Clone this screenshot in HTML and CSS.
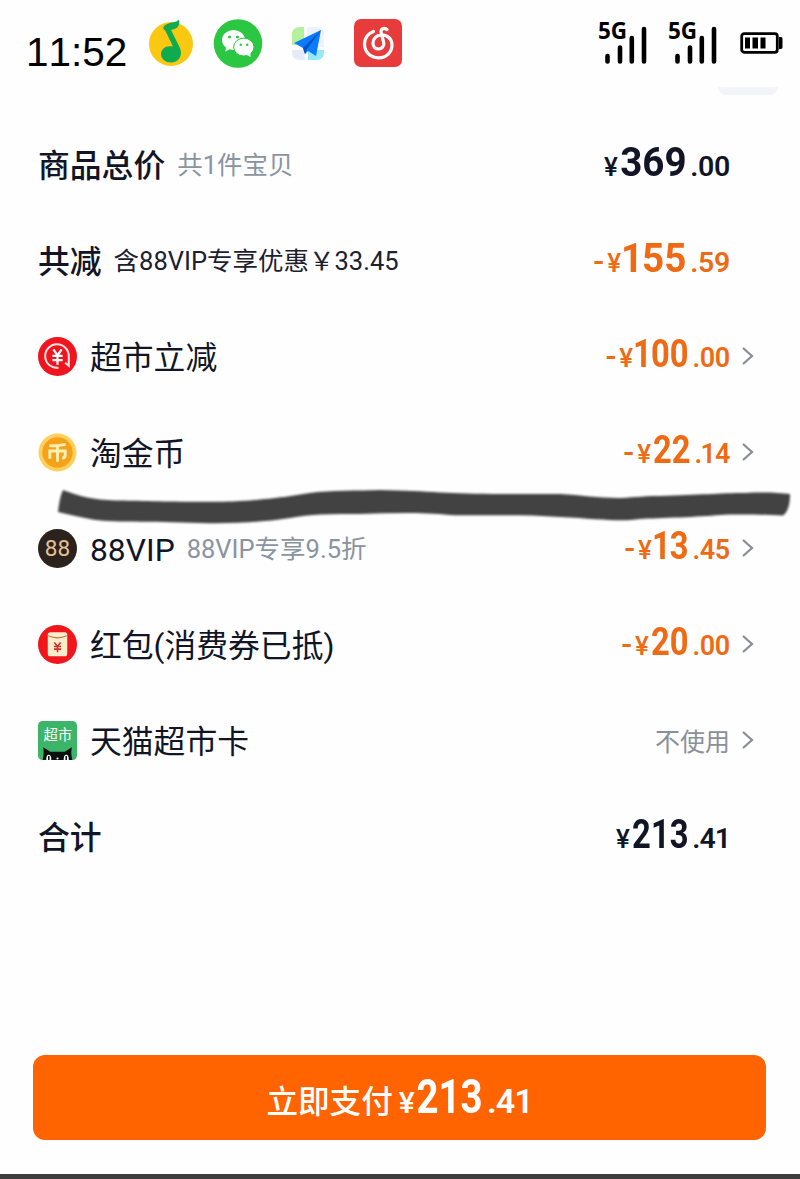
FILE: index.html
```
<!DOCTYPE html>
<html lang="zh-CN">

<head>
    <meta charset="UTF-8">
    <meta name="viewport" content="width=device-width, initial-scale=1.0">
    <title>确认订单</title>

    <link rel="stylesheet" href="styles.css">
</head>

<body>

    <div class="page">

        <header class="status-bar">
            <span class="time">11:52</span>

            <div class="apps">
                <!-- music -->
                <svg class="app-music" width="46" height="48" viewBox="0 0 46 48">
                    <circle cx="22" cy="25" r="22" fill="#fac810" />
                    <path d="M30 0.500C28 4 19 3 15 7C13.500 9 15 11 16.500 12L24 27.500C17 26 12 30 12 35C12 40 17 43.500 22 43.500C28 43.500 32 39 32 34C32 31 31 29 30 27L22 11C27 10 31.500 8 30 0.500Z" fill="#0fab4f" />
                </svg>
                <!-- chat -->
                <svg class="app-chat" width="50" height="50" viewBox="0 0 50 50">
                    <circle cx="25" cy="24.500" r="24.300" fill="#2bc642" />
                    <ellipse cx="20.500" cy="21" rx="11.500" ry="10" fill="#fff" />
                    <path d="M13 27.500L12.500 32.500L18 29.500Z" fill="#fff" />
                    <ellipse cx="30.800" cy="28.100" rx="10.200" ry="8.900" fill="#fff" stroke="#2bc642" stroke-width="1" />
                    <path d="M33 35.500L37.500 38L37.500 33Z" fill="#fff" />
                    <circle cx="16.500" cy="18" r="1.500" fill="#2bc642" />
                    <circle cx="24.500" cy="18" r="1.500" fill="#2bc642" />
                    <circle cx="27.700" cy="25.800" r="1.200" fill="#2bc642" />
                    <circle cx="34.200" cy="25.800" r="1.200" fill="#2bc642" />
                </svg>
                <!-- paper plane -->
                <svg class="app-plane" width="34" height="34" viewBox="0 0 34 34">
                    <path d="M1 16V9Q1 1 9 1H13V19H1Z" fill="#b5f09a" />
                    <path d="M16 1H26Q33 1 33 9V21H16Z" fill="#eef3fb" />
                    <path d="M1 24H14V34H9Q1 34 1 27Z" fill="#e8eaf8" />
                    <path d="M17 24H33V26Q33 34 25 34H17Z" fill="#96e8f6" />
                    <path d="M30 4L3 17L12 22L14 28L17 25L25 30Z" fill="#0b7bff" />
                    <path d="M30 4L12 22L14 28L16 23Z" fill="#0752c4" />
                </svg>
                <!-- cloud music -->
                <svg class="app-cloud" width="48" height="48" viewBox="0 0 48 48">
                    <rect width="48" height="48" rx="7" fill="#e83c3c" />
                    <path d="M19.500 12.500C13 15 10.500 20 10.500 25C10.500 33 16.500 38.800 24.500 38.800C32.500 38.800 38 33 38 26C38 19.500 33 15.800 27.500 15.800C22.500 16 19 19.500 19 24C19 28 21.500 30 24.500 30C28 30 30.500 27 29.700 23.500L27.300 14.500C26.500 11.500 27.500 9.500 30 9.300C31.300 9.300 32.300 9.800 33 10.600" fill="none" stroke="#fff" stroke-width="3.200" stroke-linecap="round" />
                </svg>
            </div>

            <div class="system">
                <svg class="signal" width="50" height="44" viewBox="0 0 50 44">
                    <text x="0" y="17">5G</text>
                    <path d="M9.500 34V39.500M22 25.500V39.500M33.800 16V39.500M46 7V39.500" />
                </svg>
                <svg class="signal" width="50" height="44" viewBox="0 0 50 44">
                    <text x="0" y="17">5G</text>
                    <path d="M9.500 34V39.500M22 25.500V39.500M33.800 16V39.500M46 7V39.500" />
                </svg>
                <svg class="battery" width="44" height="22" viewBox="0 0 44 22">
                    <rect x="1.700" y="1.700" width="35.600" height="18.600" rx="2.500" fill="#fff" stroke="#000" stroke-width="2.800" />
                    <path d="M5 5.500H10V16.500H5ZM12.500 5.500H18V16.500H12.500ZM20.500 5.500H25.500V16.500H20.500ZM39 5H41Q42.500 5 42.500 7V15Q42.500 17 41 17H39Z" />
                </svg>
            </div>
        </header>

        <div class="tab-edge"></div>

        <main class="bill">

            <div class="row strong">
                <span class="label">商品总价</span>
                <span class="note">共1件宝贝</span>
                <div class="price"><span class="yen">¥</span><b class="wide">369</b><i>.00</i></div>
            </div>

            <div class="row strong">
                <span class="label">共减</span>
                <span class="note dark">含88VIP专享优惠￥33.45</span>
                <div class="price orange"><span class="minus">-</span><span class="yen">¥</span><b class="wide"><span class="one">1</span>55</b><i>.59</i></div>
            </div>

            <div class="row">
                <svg class="icon" viewBox="0 0 38 38">
                    <circle cx="19" cy="19" r="19" fill="#f0141e" />
                    <path d="M20 30A11.500 11.500 0 1 1 30 19V28L26.500 25" fill="none" stroke="#ffe3df" stroke-width="2" />
                    <path d="M15 12L19 18L23 12M14 18.500H24M14 22.500H24M19 18V27" fill="none" stroke="#fff" stroke-width="2.200" />
                </svg>
                <span class="label">超市立减</span>
                <div class="price small orange"><span class="minus">-</span><span class="yen">¥</span><b><span class="one">1</span>00</b><i>.00</i></div>
                <svg class="arrow" viewBox="0 0 12 20"><path d="M1 2L10 10L1 18" /></svg>
            </div>

            <div class="row">
                <svg class="icon" viewBox="0 0 38 38">
                    <circle cx="19" cy="19" r="18.500" fill="#ffd05c" />
                    <circle cx="19" cy="19" r="14.800" fill="#f5a21b" />
                    <path d="M11 12.500Q19 12.500 27 11M11.500 25V17.500H26.500V22Q26.500 24.500 23.500 24.500M19 12.500V28" fill="none" stroke="#fff0b5" stroke-width="2.800" />
                </svg>
                <span class="label">淘金币</span>
                <div class="price small orange"><span class="minus">-</span><span class="yen">¥</span><b class="two">22</b><i>.<span class="one">1</span>4</i></div>
                <svg class="arrow" viewBox="0 0 12 20"><path d="M1 2L10 10L1 18" /></svg>
            </div>

            <div class="row">
                <svg class="icon" viewBox="0 0 38 38">
                    <circle cx="19" cy="19" r="19" fill="#2b221e" />
                    <text class="vip-text" x="19" y="26.500" text-anchor="middle">88</text>
                </svg>
                <span class="label">88VIP</span>
                <span class="note">88VIP专享9.5折</span>
                <div class="price small orange"><span class="minus">-</span><span class="yen">¥</span><b class="two"><span class="one">1</span>3</b><i>.45</i></div>
                <svg class="arrow" viewBox="0 0 12 20"><path d="M1 2L10 10L1 18" /></svg>
            </div>

            <div class="row">
                <svg class="icon" viewBox="0 0 38 38">
                    <circle cx="19" cy="19" r="19" fill="#f0161c" />
                    <rect x="9.500" y="7" width="19" height="23.500" rx="2.500" fill="#fdeccb" />
                    <path d="M10 10.500Q19 14.500 28 10.500" fill="none" stroke="#c4723e" stroke-width="1.200" />
                    <path d="M16 17L19 21L22 17M15.500 21H22.500M15.500 23.500H22.500M19 21V26.500" fill="none" stroke="#c8322c" stroke-width="1.500" />
                </svg>
                <span class="label">红包(消费券已抵)</span>
                <div class="price small orange"><span class="minus">-</span><span class="yen">¥</span><b class="two">20</b><i>.00</i></div>
                <svg class="arrow" viewBox="0 0 12 20"><path d="M1 2L10 10L1 18" /></svg>
            </div>

            <div class="row">
                <svg class="icon" viewBox="0 0 38 38">
                    <rect width="38" height="38" rx="4.500" fill="#3cb568" />
                    <text class="market-text" x="19.300" y="18.500" text-anchor="middle">超市</text>
                    <path d="M4.500 38C5.500 34 6 30 5 25.500L12 30H26L33 25.500C32 30 32.500 34 33.500 38Z" fill="#0c100e" />
                    <path d="M8 38Q8 33 10.500 33Q13 33 13 38ZM25 38Q25 33 27.500 33Q30 33 30 38Z" fill="#fff" />
                    <path d="M10.500 34V38M27.500 34V38" stroke="#0c100e" stroke-width="1.500" />
                    <circle cx="19" cy="36.500" r="1" fill="#fff" />
                </svg>
                <span class="label">天猫超市卡</span>
                <span class="unused">不使用</span>
                <svg class="arrow" viewBox="0 0 12 20"><path d="M1 2L10 10L1 18" /></svg>
            </div>

            <div class="row strong">
                <span class="label">合计</span>
                <div class="price"><span class="yen">¥</span><b class="narrow">213</b><i>.41</i></div>
            </div>

            <!-- marker line drawn over the list -->
            <svg class="marker" width="736" height="40" viewBox="56 486 736 40">
                <path d="M63 490C85 498 95 500 120 500.500C150 501 210 503 240 501C275 499 290 496 310 493C330 490 360 491 380 490C430 491 450 494 500 494H560C580 495 600 498 617 498C630 498 640 496 660 496C700 495 720 493 745 493C765 492 780 493 790 494C790 502 789 511 783 515.500C765 515 740 514 720 515C700 517 660 518 640 519C620 522 600 519 560 517C520 514 480 516 450 515C420 512 390 513 360 514C330 514 310 514 290 518C265 522 230 524 200 523C150 521 110 523 90 519C78 517 68 514 58 512C59 504 60 496 63 490Z" />
            </svg>

        </main>

        <button class="pay-btn">
            <span class="pay-text">立即支付</span>
            <span class="price pay-price"><span class="yen">¥</span><b class="narrow">213</b><i>.41</i></span>
        </button>

        <div class="bottom-line"></div>

    </div>

</body>

</html>
```

FILE: styles.css
```
*,
*::before,
*::after {
    margin: 0;
    padding: 0;
    box-sizing: border-box;
}

body {
    background-color: #fefefe;
    color: #111525;
    font-family: Roboto, "Noto Sans CJK SC", sans-serif;
}

.page {
    display: flex;
    flex-direction: column;
    width: 800px;
    height: 1179px;
    overflow: hidden;
}

/* status bar */

.status-bar {
    display: flex;
    align-items: flex-start;
    height: 87px;
    padding: 19px 16px 0 26px;
}

.time {
    width: 123px;
    margin-top: 10px;
    color: #000;
    font: 40.5px/46px "Liberation Sans", sans-serif;
    font-kerning: none;
}

.apps,
.system {
    display: flex;
    align-items: flex-start;
}

.app-music {
    margin-right: 18px;
}

.app-plane {
    margin: 7px 29px 0 28px;
}

.system {
    margin-left: auto;
    padding-top: 3px;
}

.signal {
    margin-right: 20px;
    overflow: visible;
}

.signal + .battery {
    margin-left: 2px;
}

.signal text {
    font: bold 22.5px "Noto Sans", sans-serif;
}

.signal path {
    fill: none;
    stroke: #000;
    stroke-width: 4.6;
    stroke-linecap: round;
}

.battery {
    margin-top: 10px;
}

.tab-edge {
    width: 60px;
    height: 8px;
    margin-left: 718px;
    border-radius: 0 0 8px 8px;
    background-color: #f1f4f8;
}

/* bill rows */

.bill {
    position: relative;
    margin-top: 21px;
}

.row {
    display: flex;
    align-items: center;
    height: 96px;
    padding: 0 46px 0 38px;
}

.row.strong {
    padding-right: 70px;
}

.icon {
    width: 39px;
    height: 39px;
    margin-right: 13px;
}

.label {
    font-size: 31.8px;
    line-height: 40px;
    padding-top: 3px;
}

.strong .label {
    font-weight: 500;
}

.note {
    margin-left: 12px;
    padding-top: 2px;
    color: #8a94a1;
    font-size: 25.5px;
    line-height: 32px;
}

.note.dark {
    color: #1c2030;
}

.price {
    display: flex;
    align-items: baseline;
    margin-left: auto;
    font-weight: 500;
    line-height: 48px;
}

/* narrow digits */
.price b {
    margin-left: -0.24em;
    font-size: 41px;
    font-weight: 700;
    transform: scaleX(0.86);
    transform-origin: right;
}

.price b.two {
    margin-left: -0.16em;
}

.price b.wide {
    margin-left: -0.1em;
    transform: scaleX(0.94);
}

.price b.narrow {
    margin-left: -0.34em;
    transform: scaleX(0.8);
}

.price i {
    margin-left: 4px;
    font-size: 28.5px;
    font-style: normal;
    font-weight: 600;
    letter-spacing: -0.3px;
}

.price b.narrow + i {
    letter-spacing: -1px;
}

.price .yen {
    margin-right: 2px;
    font-size: 26px;
}

.price .minus {
    margin-right: 3px;
    font-size: 32px;
}

/* the digit 1 takes less room than the others */
.one {
    margin-left: -0.05em;
    margin-right: -0.03em;
}

.price.small b {
    font-size: 38px;
}

.price.small i {
    font-size: 27px;
}

.orange {
    color: #ee6a14;
}

.unused {
    margin-left: auto;
    color: #8a909b;
    font-size: 25px;
}

.arrow {
    width: 12px;
    height: 20px;
    margin-left: 12px;
}

.arrow path {
    fill: none;
    stroke: #888c94;
    stroke-width: 2.2;
}

.vip-text {
    fill: #e3c395;
    font-size: 22px;
}

.market-text {
    fill: #fff;
    font-size: 14px;
}

.marker {
    position: absolute;
    top: 370px;
    left: 56px;
}

.marker path {
    fill: #424242;
    filter: blur(0.8px);
}

/* pay button */

.pay-btn {
    display: flex;
    align-items: baseline;
    justify-content: center;
    width: 733px;
    height: 85px;
    padding-top: 18px;
    margin: 171px 0 0 33px;
    border: none;
    border-radius: 12px;
    background-color: #ff6400;
    color: #fff;
    font-family: inherit;
}

.pay-text {
    font-size: 31.6px;
    font-weight: 500;
}

.price.pay-price {
    margin-left: 6px;
}

.pay-price .yen {
    font-size: 30px;
}

.pay-price b {
    font-size: 48px;
}

.pay-price i {
    font-size: 34px;
}

.bottom-line {
    height: 5px;
    margin-top: auto;
    background-color: #3e3e3e;
}
```
